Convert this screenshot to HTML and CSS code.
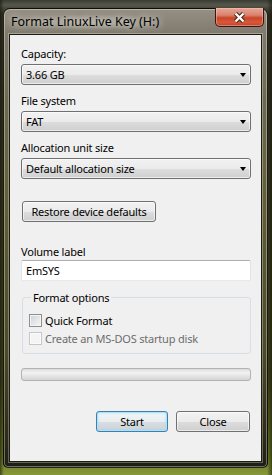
FILE: index.html
```html
<!DOCTYPE html>
<html lang="en">
  <head>
    <meta charset="UTF-8" />
    <title>Format LinuxLive Key (H:)</title>
    <link rel="stylesheet" href="styles.css">
  </head>
  <body>
    <div class="window">
      <div class="titlebar">
        <span class="title">Format LinuxLive Key (H:)</span>
        <div class="close-btn">
          <svg width="13" height="11" viewBox="0 0 13 11">
            <path d="M2.5 1.5 L10.5 9.5 M10.5 1.5 L2.5 9.5" stroke="#4a2318" stroke-width="4.4" />
            <path d="M2.5 1.5 L10.5 9.5 M10.5 1.5 L2.5 9.5" stroke="#ffffff" stroke-width="2.4" />
          </svg>
        </div>
      </div>

      <div class="client">
        <label class="field-label first">Capacity:</label>
        <div class="combo"><span>3.66 GB</span><span class="arrow"></span></div>

        <label class="field-label">File system</label>
        <div class="combo"><span>FAT</span><span class="arrow"></span></div>

        <label class="field-label">Allocation unit size</label>
        <div class="combo"><span>Default allocation size</span><span class="arrow"></span></div>

        <button class="btn restore">Restore device defaults</button>

        <label class="field-label volume">Volume label</label>
        <div class="textbox">EmSYS</div>

        <fieldset class="group">
          <legend>Format options</legend>
          <div class="check-row"><span class="check"></span>Quick Format</div>
          <div class="check-row disabled"><span class="check"></span>Create an MS-DOS startup disk</div>
        </fieldset>

        <div class="progress"></div>

        <div class="actions">
          <button class="btn default">Start</button>
          <button class="btn close">Close</button>
        </div>
      </div>
    </div>
  </body>
</html>
```

FILE: styles.css
```css
html,
body {
  margin: 0;
  padding: 0;
}
body {
  width: 272px;
  height: 475px;
  overflow: hidden;
  font-family: "Noto Sans", "Open Sans", sans-serif;
  font-size: 11px;
  letter-spacing: -0.2px;
  line-height: 15px;
  color: #000;
  background:
    linear-gradient(to right, rgba(20, 20, 10, 0.6), rgba(0, 0, 0, 0) 4px, rgba(0, 0, 0, 0) 267px, rgba(20, 20, 10, 0.6)),
    linear-gradient(to bottom, #3a3c34 0, #55574c 5px, #2f2f22 14px, #33331f 40%, #3f4418 80%, #6b7a22 96%, #86963a 100%);
}
.window {
  box-sizing: border-box;
  width: 265px;
  height: 460px;
  margin: 8px 0 0 3px;
  padding: 0 5px 5px 5px;
  border: 1px solid rgba(10, 10, 5, 0.8);
  border-radius: 7px 7px 5px 5px;
  box-shadow: inset 0 0 0 1px rgba(255, 255, 240, 0.35);
  background: linear-gradient(to bottom, #958f84 0, #7f796d 26px, #6e6a52 90px, #615d38 45%, #4c4a2a 75%, #2a2818 95%, #1f1e14 100%);
  display: flex;
  flex-direction: column;
}
.titlebar {
  height: 25px;
  flex: none;
  display: flex;
  align-items: flex-start;
}
.title {
  margin: 5px 0 0 1px;
  padding: 0 6px 0 1px;
  font-size: 12.5px;
  line-height: 16px;
  letter-spacing: 0;
  text-shadow: 0 0 6px rgba(230, 228, 218, 0.9), 0 0 10px rgba(230, 228, 218, 0.8);
  background: radial-gradient(ellipse at center, rgba(200, 196, 186, 0.55), rgba(200, 196, 186, 0) 70%);
}
.close-btn {
  box-sizing: border-box;
  margin: -1px -2px 0 auto;
  width: 49px;
  height: 19px;
  border: 1px solid #3b1610;
  border-top: none;
  border-radius: 0 0 5px 5px;
  background: linear-gradient(to bottom, #e6a898 0, #d9826e 40%, #c8452a 55%, #d8583a 80%, #b8402a 100%);
  box-shadow: inset 0 0 0 1px rgba(255, 200, 190, 0.45);
  display: flex;
  align-items: center;
  justify-content: center;
}
.client {
  flex: 1;
  box-sizing: border-box;
  padding: 11px 10px 0 11px;
  background: #f0f0f0;
  border: 1px solid #1d1c12;
  box-shadow: 0 0 0 1px rgba(255, 255, 240, 0.3);
  display: flex;
  flex-direction: column;
  align-items: stretch;
}
.field-label {
  display: block;
  height: 15px;
  margin-top: 8px;
}
.field-label.first {
  margin-top: 0;
}
.field-label.volume {
  margin-top: 22px;
}
.combo {
  box-sizing: border-box;
  height: 21px;
  margin-top: 3px;
  padding: 0 4px 0 4px;
  border: 1px solid #707070;
  border-radius: 3px;
  background: linear-gradient(to bottom, #f2f2f2 0, #ebebeb 50%, #dddddd 51%, #cfcfcf 100%);
  box-shadow: inset 0 0 0 1px rgba(255, 255, 255, 0.6);
  display: flex;
  align-items: center;
  justify-content: space-between;
}
.arrow {
  width: 0;
  height: 0;
  border-left: 3.5px solid transparent;
  border-right: 3.5px solid transparent;
  border-top: 4px solid #000;
}
.btn {
  box-sizing: border-box;
  height: 21px;
  padding: 0;
  font-family: inherit;
  font-size: 11px;
  letter-spacing: -0.2px;
  color: #000;
  border: 1px solid #707070;
  border-radius: 3px;
  background: linear-gradient(to bottom, #f2f2f2 0, #ebebeb 50%, #dddddd 51%, #cfcfcf 100%);
  box-shadow: inset 0 0 0 1px rgba(255, 255, 255, 0.6);
}
.btn.restore {
  width: 134px;
  margin: 22px 0 0 1px;
  align-self: flex-start;
}
.btn.default {
  width: 72px;
  border-color: #3c7fb1;
  box-shadow: inset 0 0 0 1px #aee2f8, inset 0 0 2px 1px rgba(120, 200, 240, 0.5);
  background: linear-gradient(to bottom, #f0f5f7 0, #e8eef1 50%, #d8dfe3 51%, #cbd3d8 100%);
}
.btn.close {
  width: 74px;
}
.textbox {
  box-sizing: border-box;
  height: 21px;
  margin-top: 1px;
  padding: 2px 4px 0 4px;
  background: #fff;
  border: 1px solid #e2e3ea;
  border-top-color: #abadb3;
  border-bottom-color: #e3e9ef;
  border-radius: 2px;
}
.group {
  margin: 9px 0 0 1px;
  padding: 6px 6px 6px 6px;
  border: 1px solid #d5dfe5;
  border-radius: 3px;
}
.group legend {
  padding: 0 2px;
  margin-left: 2px;
  height: 15px;
}
.check-row {
  height: 18px;
  display: flex;
  align-items: center;
}
.check {
  box-sizing: border-box;
  width: 13px;
  height: 13px;
  margin-right: 3px;
  border: 1px solid #8e8f8f;
  background: linear-gradient(135deg, #cbcfd5 0, #e4e5e8 50%, #f6f6f6 100%);
  box-shadow: inset 0 0 0 1px #f4f4f4;
}
.check-row.disabled {
  color: #6d6d6d;
}
.check-row.disabled .check {
  border-color: #c6c6c6;
  background: #f4f4f4;
  box-shadow: inset 0 0 0 1px #fbfbfb;
}
.progress {
  box-sizing: border-box;
  height: 13px;
  margin-top: 14px;
  border: 1px solid #b2b2b2;
  border-radius: 3px;
  background: linear-gradient(to bottom, #dcdcdc 0, #f2f2f2 35%, #e6e6e6 60%, #d4d4d4 100%);
}
.actions {
  margin-top: 30px;
  padding-right: 1px;
  display: flex;
  justify-content: flex-end;
  gap: 8px;
}
```
